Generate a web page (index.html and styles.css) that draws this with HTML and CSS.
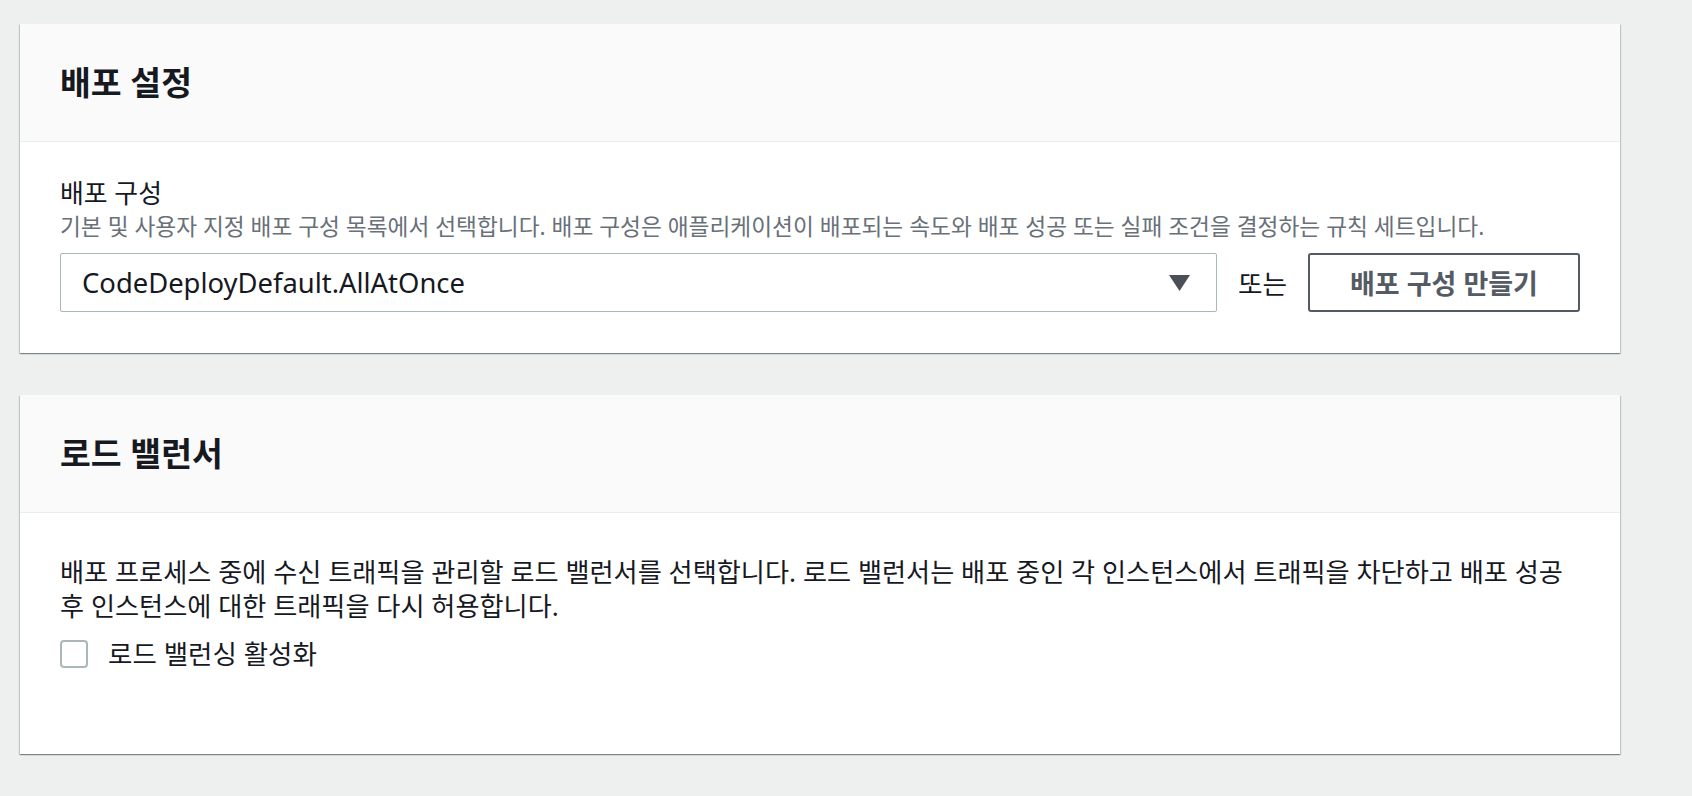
FILE: index.html
```html
<!DOCTYPE html>
<html lang="ko">
<head>
  <meta charset="UTF-8">
  <title>배포 설정</title>
  <link rel="stylesheet" href="styles.css">
</head>
<body>
  <main class="page">
    <!-- Deployment settings -->
    <section class="panel">
      <div class="panel-header">
        <h2>배포 설정</h2>
      </div>
      <div class="panel-body">
        <div class="field-label">배포 구성</div>
        <div class="field-desc">기본 및 사용자 지정 배포 구성 목록에서 선택합니다. 배포 구성은 애플리케이션이 배포되는 속도와 배포 성공 또는 실패 조건을 결정하는 규칙 세트입니다.</div>
        <div class="control-row">
          <div class="select">
            <span>CodeDeployDefault.AllAtOnce</span>
            <svg class="caret" width="21" height="16" viewBox="0 0 21 16"><path d="M0 0H21L10.5 16Z" fill="#4b5058"/></svg>
          </div>
          <span class="or">또는</span>
          <button class="btn">배포 구성 만들기</button>
        </div>
      </div>
    </section>

    <!-- Load balancer -->
    <section class="panel">
      <div class="panel-header">
        <h2>로드 밸런서</h2>
      </div>
      <div class="panel-body lb-body">
        <p class="text">배포 프로세스 중에 수신 트래픽을 관리할 로드 밸런서를 선택합니다. 로드 밸런서는 배포 중인 각 인스턴스에서 트래픽을 차단하고 배포 성공 후 인스턴스에 대한 트래픽을 다시 허용합니다.</p>
        <label class="check">
          <span class="box"></span>
          <span>로드 밸런싱 활성화</span>
        </label>
      </div>
    </section>
  </main>
</body>
</html>
```

FILE: styles.css
```css
/* Base */
* { margin: 0; padding: 0; box-sizing: border-box; }
body { background: #eeefef; color: #16191f; font-family: "Noto Sans", "Noto Sans CJK KR", sans-serif; }

/* Layout */
.page { width: 1600px; margin-left: 20px; padding-top: 24px; }

.panel { background: #fff; margin-bottom: 42px; box-shadow: 0 1px 1px 0 rgba(0,28,36,0.3), 1px 1px 1px 0 rgba(0,28,36,0.15), -1px 1px 1px 0 rgba(0,28,36,0.15); }
.panel-header { background: #fafafa; border-bottom: 1px solid #eaeded; padding: 38px 40px; }
.panel-header h2 { font-size: 33.5px; line-height: 41px; font-weight: 700; }
.panel-body { padding: 34px 40px 41px; }

/* Form field */
.field-label { font-size: 25.9px; line-height: 34px; }
.field-desc { font-size: 22.7px; line-height: 34px; color: #687078; }
.control-row { display: flex; align-items: center; gap: 21px; margin-top: 9px; }
.select { flex: 1; height: 59px; border: 1px solid #aab7b8; border-radius: 2px; display: flex; align-items: center; justify-content: space-between; padding: 0 26px 0 21px; font-size: 27.4px; }
.or { font-size: 26.7px; }
.btn { width: 272px; height: 59px; background: #fff; border: 2px solid #545b64; border-radius: 3px; color: #545b64; font-family: inherit; font-size: 27px; font-weight: 700; }

/* Load balancer */
.lb-body { padding: 42px 40px 86px; }
.text { font-size: 26.2px; line-height: 34px; }
.check { display: flex; align-items: center; gap: 20px; margin-top: 17px; font-size: 26.5px; line-height: 28px; }
.check .box { width: 28px; height: 28px; border: 2px solid #aab7b8; border-radius: 4px; }
```
